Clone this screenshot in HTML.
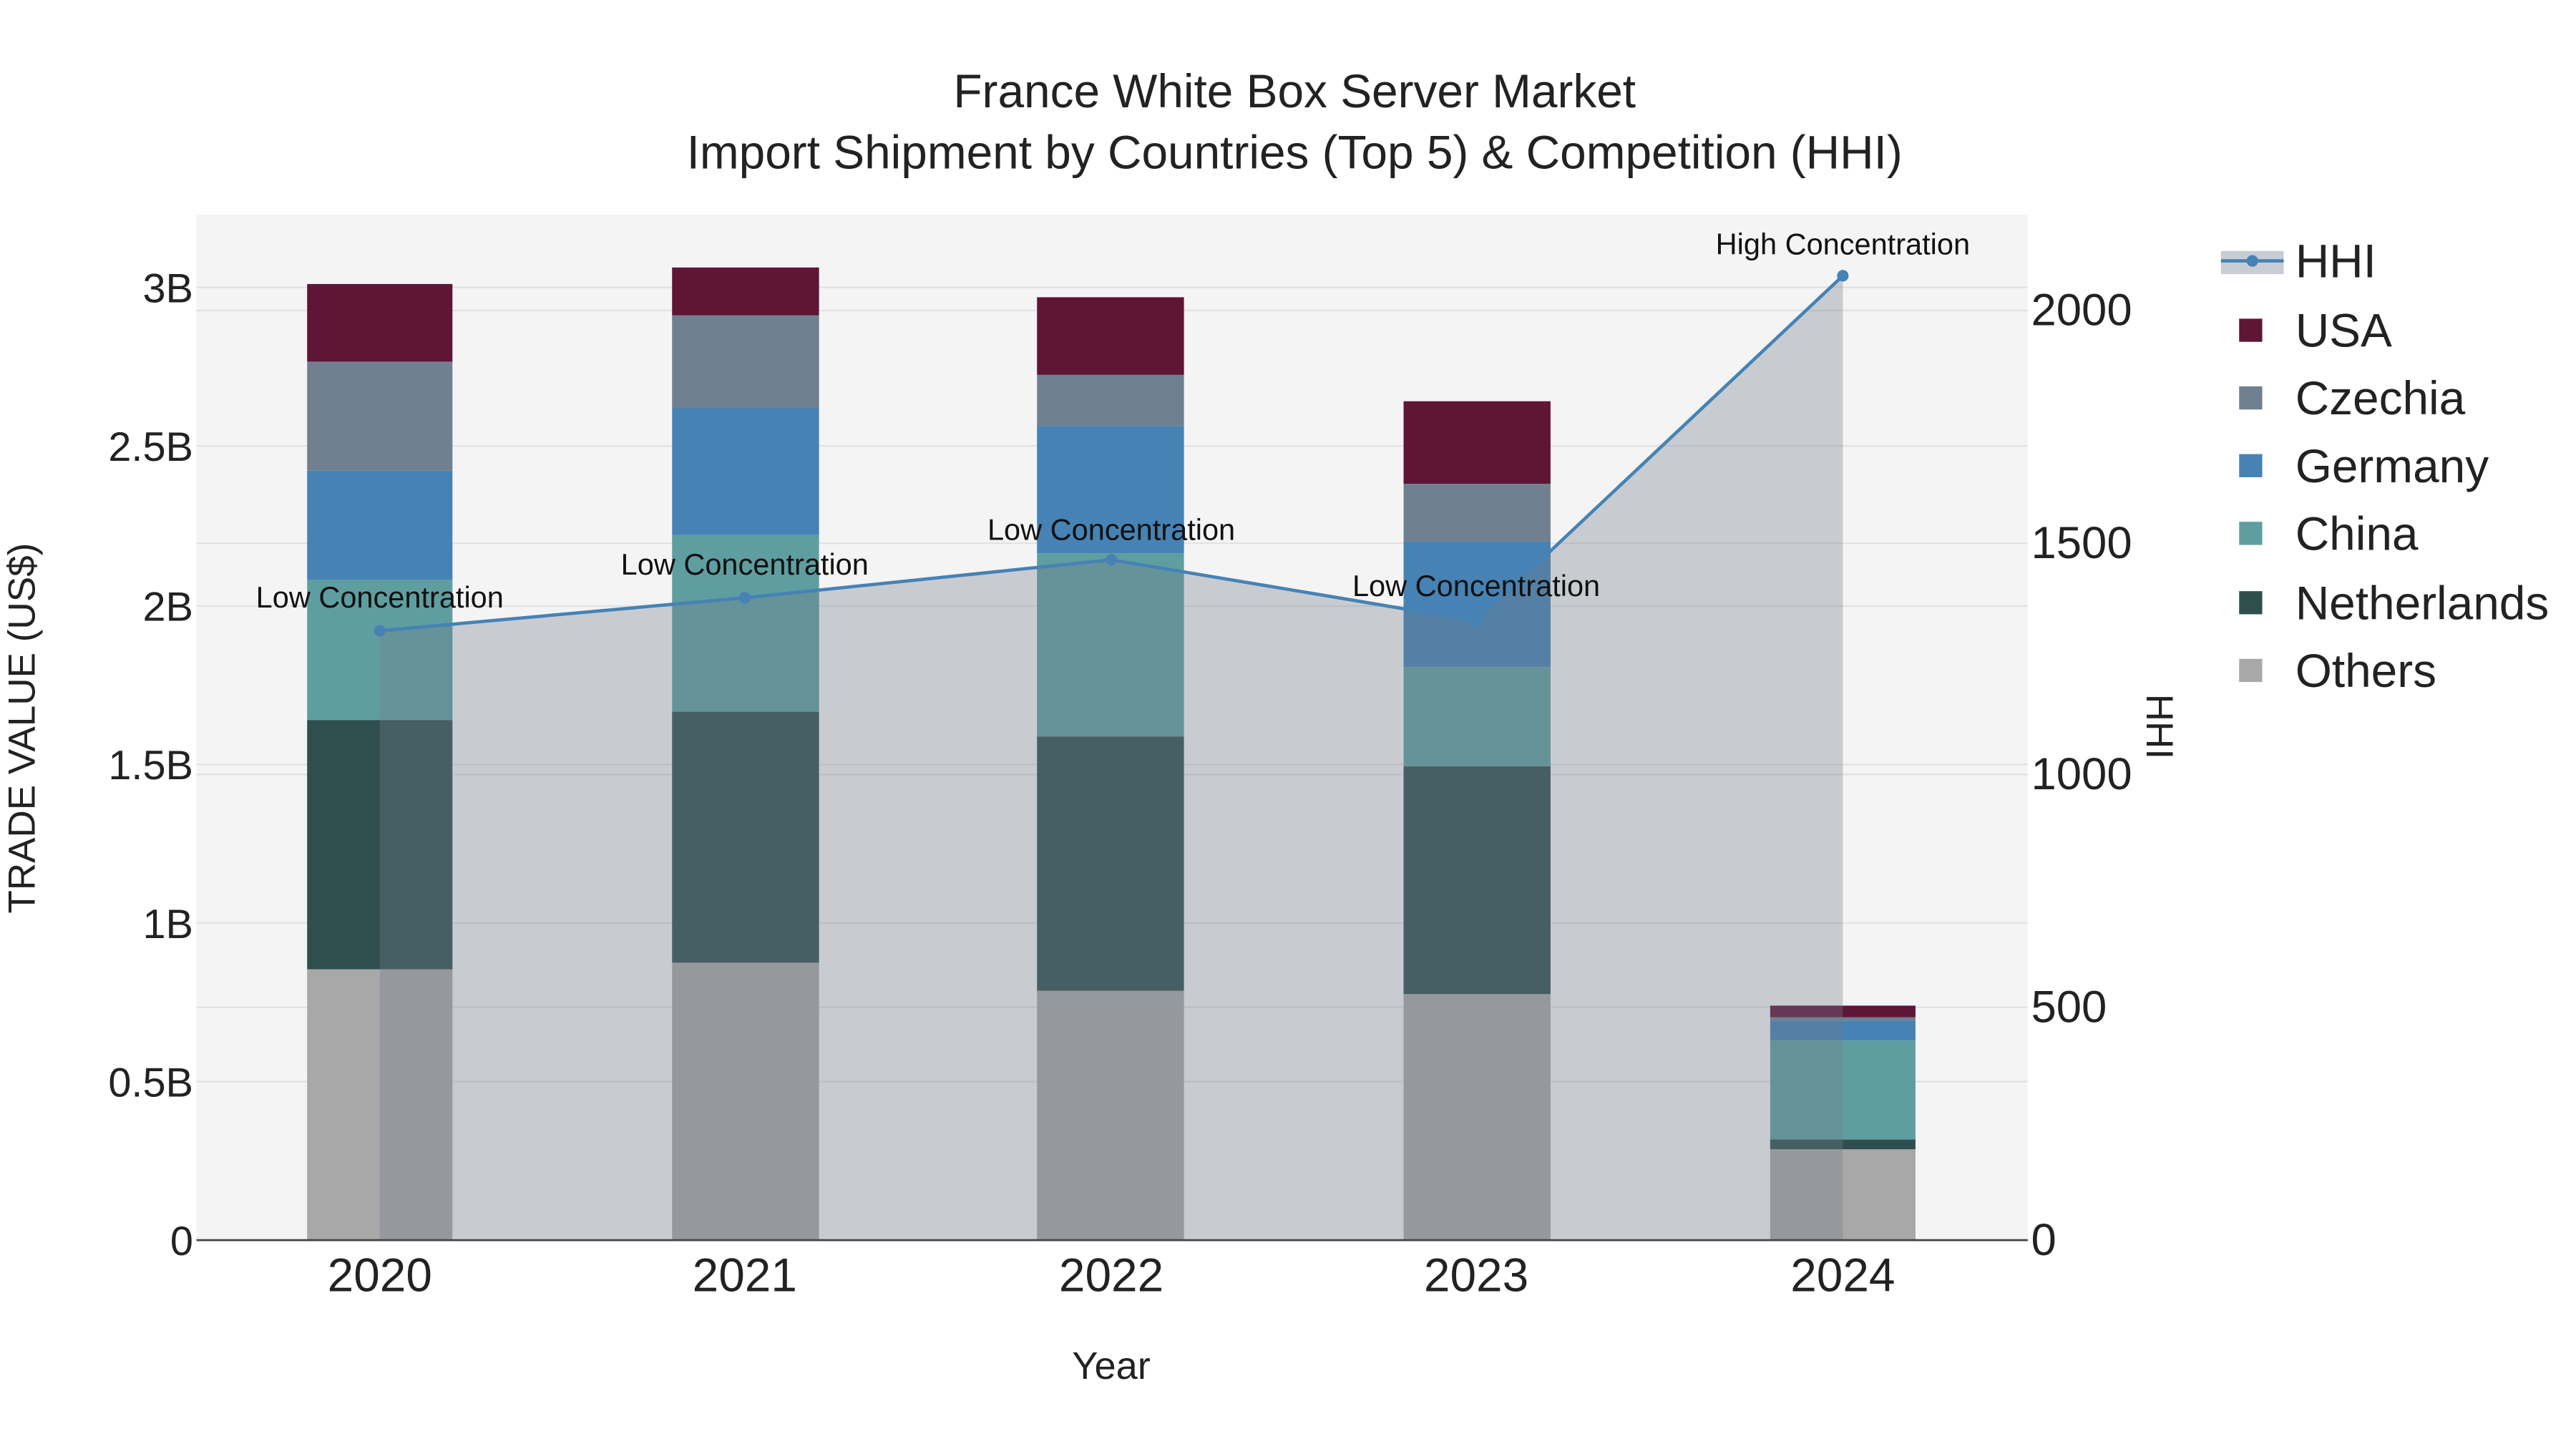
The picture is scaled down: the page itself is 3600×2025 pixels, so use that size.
<!DOCTYPE html>
<html><head><meta charset="utf-8"><style>html,body{margin:0;padding:0;background:#fff}svg{display:block}</style></head>
<body>
<svg width="3600" height="2025" viewBox="0 0 1560 877.5" xmlns="http://www.w3.org/2000/svg" font-family="Liberation Sans, Arial, sans-serif">
<rect width="1560" height="877.5" fill="#fff"/>
<rect x="119" y="130" width="1109" height="621" fill="#f4f4f4"/>
<g stroke="#e2e2e2" stroke-width="1">
<line x1="119" x2="1228" y1="655" y2="655"/><line x1="119" x2="1228" y1="559" y2="559"/><line x1="119" x2="1228" y1="463" y2="463"/><line x1="119" x2="1228" y1="367" y2="367"/><line x1="119" x2="1228" y1="270" y2="270"/><line x1="119" x2="1228" y1="174" y2="174"/>
<line x1="119" x2="1228" y1="610" y2="610"/><line x1="119" x2="1228" y1="469" y2="469"/><line x1="119" x2="1228" y1="329" y2="329"/><line x1="119" x2="1228" y1="188" y2="188"/>
</g>
<g>
<rect x="186" y="587" width="88" height="164" fill="#a8a8a8"/><rect x="186" y="436" width="88" height="151" fill="#2f4f4f"/><rect x="186" y="351" width="88" height="85" fill="#5f9ea0"/><rect x="186" y="285" width="88" height="66" fill="#4682b4"/><rect x="186" y="219" width="88" height="66" fill="#708090"/><rect x="186" y="172" width="88" height="47" fill="#5e1536"/>
<rect x="407" y="583" width="89" height="168" fill="#a8a8a8"/><rect x="407" y="431" width="89" height="152" fill="#2f4f4f"/><rect x="407" y="324" width="89" height="107" fill="#5f9ea0"/><rect x="407" y="247" width="89" height="77" fill="#4682b4"/><rect x="407" y="191" width="89" height="56" fill="#708090"/><rect x="407" y="162" width="89" height="29" fill="#5e1536"/>
<rect x="628" y="600" width="89" height="151" fill="#a8a8a8"/><rect x="628" y="446" width="89" height="154" fill="#2f4f4f"/><rect x="628" y="335" width="89" height="111" fill="#5f9ea0"/><rect x="628" y="258" width="89" height="77" fill="#4682b4"/><rect x="628" y="227" width="89" height="31" fill="#708090"/><rect x="628" y="180" width="89" height="47" fill="#5e1536"/>
<rect x="850" y="602" width="89" height="149" fill="#a8a8a8"/><rect x="850" y="464" width="89" height="138" fill="#2f4f4f"/><rect x="850" y="404" width="89" height="60" fill="#5f9ea0"/><rect x="850" y="328" width="89" height="76" fill="#4682b4"/><rect x="850" y="293" width="89" height="35" fill="#708090"/><rect x="850" y="243" width="89" height="50" fill="#5e1536"/>
<rect x="1072" y="696" width="88" height="55" fill="#a8a8a8"/><rect x="1072" y="690" width="88" height="6" fill="#2f4f4f"/><rect x="1072" y="630" width="88" height="60" fill="#5f9ea0"/><rect x="1072" y="618" width="88" height="12" fill="#4682b4"/><rect x="1072" y="616" width="88" height="2" fill="#708090"/><rect x="1072" y="609" width="88" height="7" fill="#5e1536"/>
</g>
<polygon points="230,382 451,362 673,339 894,376 1116,167 1116,751 230,751" fill="rgb(115,125,140)" fill-opacity="0.34"/>
<line x1="119" x2="1228" y1="751" y2="751" stroke="#444" stroke-width="1.2"/>
<polyline points="230,382 451,362 673,339 894,376 1116,167" fill="none" stroke="#4682b4" stroke-width="2"/>
<g fill="#4682b4"><circle cx="230" cy="382" r="3.5"/><circle cx="451" cy="362" r="3.5"/><circle cx="673" cy="339" r="3.5"/><circle cx="894" cy="376" r="3.5"/><circle cx="1116" cy="167" r="3.5"/></g>
<g font-size="18" fill="#111" text-anchor="middle">
<text x="230" y="368">Low Concentration</text><text x="451" y="348">Low Concentration</text><text x="673" y="327">Low Concentration</text><text x="894" y="361">Low Concentration</text><text x="1116" y="154">High Concentration</text>
</g>
<g font-size="28.5" fill="#222" text-anchor="middle">
<text x="784" y="65">France White Box Server Market</text>
<text x="784" y="102">Import Shipment by Countries (Top 5) &amp; Competition (HHI)</text>
</g>
<g font-size="25" fill="#222" text-anchor="end">
<text x="117" y="760">0</text><text x="117" y="664">0.5B</text><text x="117" y="568">1B</text><text x="117" y="472">1.5B</text><text x="117" y="376">2B</text><text x="117" y="279">2.5B</text><text x="117" y="183">3B</text>
</g>
<g font-size="27.5" fill="#222">
<text x="1230" y="760">0</text><text x="1230" y="619">500</text><text x="1230" y="478">1000</text><text x="1230" y="338">1500</text><text x="1230" y="197">2000</text>
</g>
<g font-size="28.5" fill="#222" text-anchor="middle">
<text x="230" y="782">2020</text><text x="451" y="782">2021</text><text x="673" y="782">2022</text><text x="894" y="782">2023</text><text x="1116" y="782">2024</text>
</g>
<text x="673" y="835" font-size="23.5" fill="#222" text-anchor="middle">Year</text>
<text transform="translate(21,441) rotate(-90)" font-size="23" fill="#222" text-anchor="middle">TRADE VALUE (US$)</text>
<text transform="translate(1300,440) rotate(90)" font-size="23" fill="#222" text-anchor="middle">HHI</text>
<g font-size="28.5" fill="#222">
<rect x="1345" y="152" width="38" height="14" fill="#c8ccd3"/>
<line x1="1345" x2="1383" y1="158" y2="158" stroke="#4682b4" stroke-width="2"/><circle cx="1364" cy="158" r="3.5" fill="#4682b4"/>
<text x="1390" y="168">HHI</text>
<rect x="1356" y="193" width="14" height="14" fill="#5e1536"/><text x="1390" y="210">USA</text>
<rect x="1356" y="234" width="14" height="14" fill="#708090"/><text x="1390" y="251">Czechia</text>
<rect x="1356" y="275" width="14" height="14" fill="#4682b4"/><text x="1390" y="292">Germany</text>
<rect x="1356" y="316" width="14" height="14" fill="#5f9ea0"/><text x="1390" y="333">China</text>
<rect x="1356" y="358" width="14" height="14" fill="#2f4f4f"/><text x="1390" y="375">Netherlands</text>
<rect x="1356" y="399" width="14" height="14" fill="#a8a8a8"/><text x="1390" y="416">Others</text>
</g>
</svg>
</body></html>
